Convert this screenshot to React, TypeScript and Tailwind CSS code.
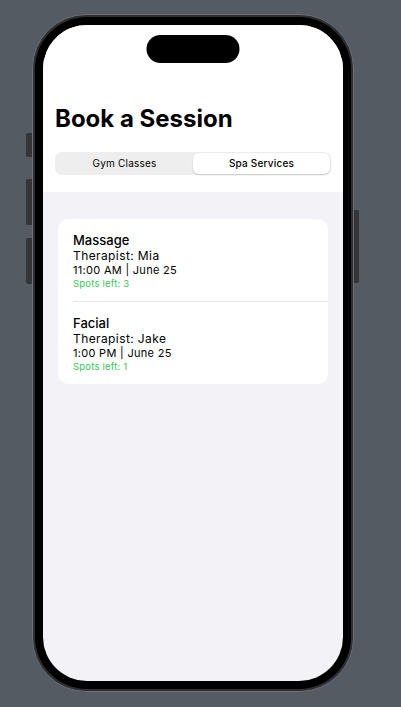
import React from 'react';

type Session = {
  id: string;
  title: string;
  host: string;
  time: string;
  spots: number;
};

const SPA: Session[] = [
  { id: 'massage', title: 'Massage', host: 'Therapist: Mia', time: '11:00 AM | June 25', spots: 3 },
  { id: 'facial', title: 'Facial', host: 'Therapist: Jake', time: '1:00 PM | June 25', spots: 1 },
];

const App: React.FC = () => {
  const tab = 'spa';

  return (
    <div className="min-h-screen bg-[#545b63] pt-[14px] pl-[32px] font-['Inter',sans-serif]">
      <div className="relative w-[322px] h-[678px]">
        {/* hardware buttons sit over the frame edge */}
        <div className="absolute left-[-6px] top-[119px] w-[6px] h-[24px] rounded-l-[2px] bg-[#333538]" />
        <div className="absolute left-[-6px] top-[165px] w-[6px] h-[46px] rounded-l-[2px] bg-[#333538]" />
        <div className="absolute left-[-6px] top-[224px] w-[6px] h-[46px] rounded-l-[2px] bg-[#333538]" />
        <div className="absolute right-[-5px] top-[196px] w-[5px] h-[73px] rounded-r-[2px] bg-[#333538]" />

        <div className="h-full rounded-[54px] border border-[#6b7077] bg-[#2f2f31] p-[2px]">
          <div className="h-full rounded-[52px] bg-black p-[8px]">
            <div className="relative h-full overflow-hidden rounded-[44px] bg-[#f2f2f7] flex flex-col">
              <div className="absolute left-1/2 top-[10px] -translate-x-1/2 w-[93px] h-[28px] rounded-full bg-black" />

              <div className="bg-white px-3 pt-[79px] pb-[17px]">
                <h1 className="text-[24px] leading-[30px] font-bold text-black">
                  Book a Session
                </h1>
                <div className="mt-[18px] flex h-[23px] rounded-[7px] bg-[#eeeeef] p-[1px]">
                  <div
                    className={`flex-1 flex items-center justify-center rounded-[6px] text-[10px] tracking-[0.2px] text-black ${
                      tab === 'gym' ? 'bg-white font-medium shadow-[0_1px_2px_rgba(0,0,0,0.18)]' : ''
                    }`}
                  >
                    Gym Classes
                  </div>
                  <div
                    className={`flex-1 flex items-center justify-center rounded-[6px] text-[10px] tracking-[0.2px] text-black ${
                      tab === 'spa' ? 'bg-white font-medium shadow-[0_1px_2px_rgba(0,0,0,0.18)]' : ''
                    }`}
                  >
                    Spa Services
                  </div>
                </div>
              </div>

              <div className="mx-[15px] mt-[27px] rounded-[10px] bg-white">
                {SPA.map((s, i) => (
                  <div key={s.id}>
                    {i > 0 && <div className="ml-[15px] h-px bg-[#e5e5ea]" />}
                    <div className="px-[15px] pt-[13px] pb-[11px] text-black">
                      <div className="text-[13px] leading-[16px] font-medium">{s.title}</div>
                      <div className="text-[12px] leading-[15px] tracking-[0.4px]">{s.host}</div>
                      <div className="text-[11px] leading-[14px] tracking-[0.3px]">{s.time}</div>
                      <div className="text-[9.5px] leading-[13px] tracking-[0.2px] text-[#34c759]">Spots left: {s.spots}</div>
                    </div>
                  </div>
                ))}
              </div>
            </div>
          </div>
        </div>
      </div>
    </div>
  );
};

export default App;
